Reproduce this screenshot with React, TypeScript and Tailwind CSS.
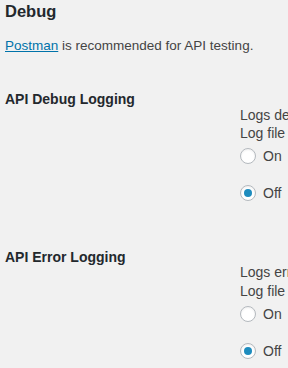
const sections = [
    { title: "API Debug Logging", desc: "Logs debug data to a file for troubleshooting.", name: "debug" },
    { title: "API Error Logging", desc: "Logs errors to a file for troubleshooting.", name: "error" },
];

const Radio = ({ checked, label }: { checked?: boolean; label: string }) => (
    <label className="flex h-[18px] items-center gap-[7px]">
        <span className="flex h-4 w-4 items-center justify-center rounded-full border border-[#b4b9be] bg-white shadow-[inset_0_1px_2px_rgba(0,0,0,0.07)]">
            {checked && <span className="h-2 w-2 rounded-full bg-[#1e8cbe]" />}
        </span>
        <span>{label}</span>
    </label>
);

export default function App() {
    return (
        <div className="h-[368px] w-[288px] overflow-hidden bg-[#f1f1f1] pl-[5px] font-['Liberation_Sans',Arial,sans-serif] text-[#444]">
            <h2 className="text-[16.5px] font-bold leading-[22px] text-[#23282d]">Debug</h2>
            <p className="mt-[14px] text-[13.5px] leading-[19.5px] whitespace-nowrap">
                <a className="text-[#0073aa] underline" href="#">
                    Postman
                </a>{" "}
                is recommended for API testing.
            </p>
            <div className="mt-[34.5px] flex flex-col gap-[46px]">
                {sections.map((s) => (
                    <div key={s.name} className="flex">
                        <div className="w-[235px] shrink-0 text-[14px] font-bold leading-[18.2px] text-[#23282d]">
                            {s.title}
                        </div>
                        <div className="flex flex-col whitespace-nowrap pt-[15.5px] text-[14px] leading-[18.2px]">
                            <div>{s.desc}</div>
                            <div>Log file is stored in wp-content/uploads/api-{s.name}.log</div>
                            <div className="mt-[5px] flex flex-col gap-[19px]">
                                <Radio label="On" />
                                <Radio checked label="Off" />
                            </div>
                        </div>
                    </div>
                ))}
            </div>
        </div>
    );
}
